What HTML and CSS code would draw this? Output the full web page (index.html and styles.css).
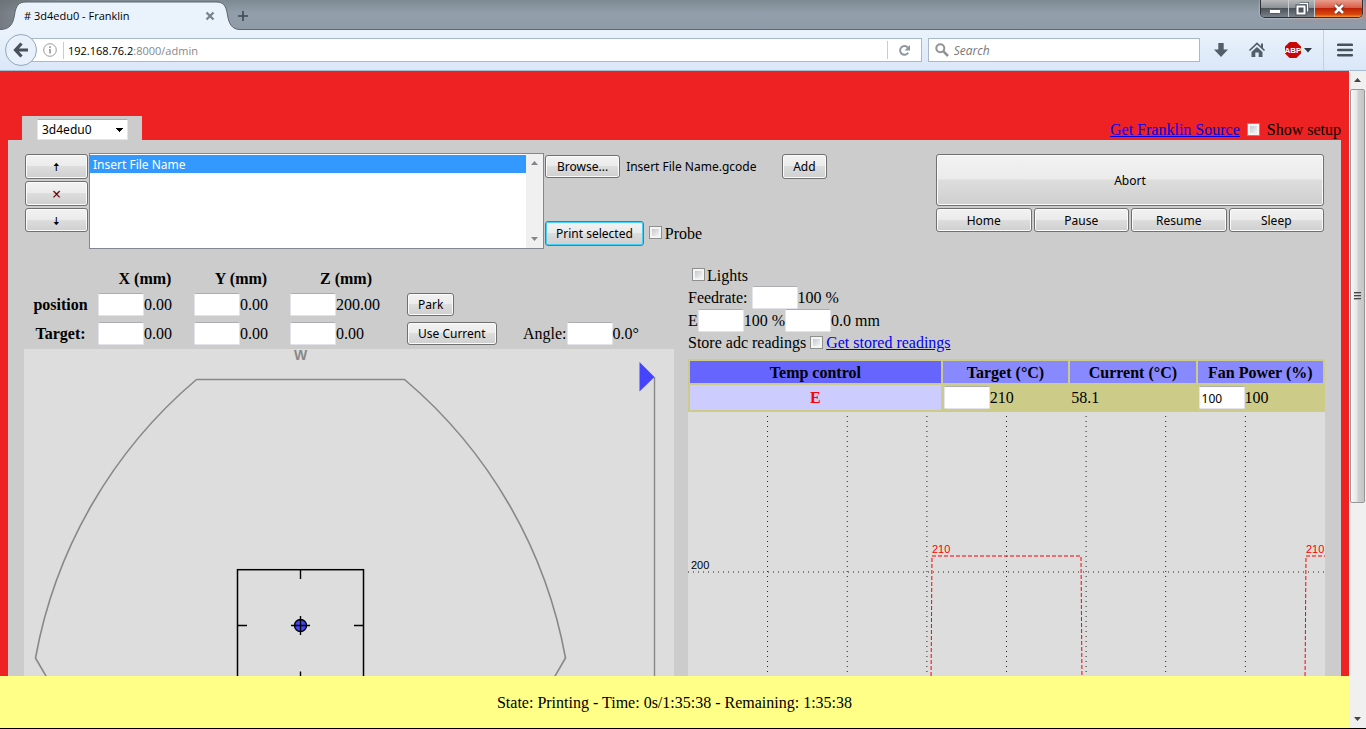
FILE: index.html
```html
<!DOCTYPE html>
<html lang="en">
<head>
<meta charset="utf-8">
<title># 3d4edu0 - Franklin</title>
<link rel="stylesheet" href="styles.css">
</head>
<body>
<header class="titlebar">
  <div class="tab">
    <svg class="tab-shape" width="244" height="30" viewBox="0 0 244 30" aria-hidden="true">
      <path d="M0 30V29.500C10 29.500 13 24 14.500 15C16 5 19 2 26 2H216C223 2 226 5 227.500 15C229 24 232 29.500 240 29.500V30Z" fill="#eaf2fc"/>
      <path d="M0 29.500C10 29.500 13 24 14.500 15C16 5 19 2 26 2H216C223 2 226 5 227.500 15C229 24 232 29.500 240 29.500" fill="none" stroke="#5c666f"/>
    </svg>
    <span class="tab-title"># 3d4edu0 - Franklin</span>
    <button class="icon-btn" type="button" aria-label="Close tab">
      <svg width="10" height="10" viewBox="0 0 10 10"><path d="M1.500 1.500L8.500 8.500M8.500 1.500L1.500 8.500" stroke="#77818b" stroke-width="2.200"/></svg>
    </button>
  </div>
  <button class="icon-btn new-tab" type="button" aria-label="New tab">
    <svg width="12" height="12" viewBox="0 0 12 12"><path d="M6 1V11M1 6H11" stroke="#3d4952" stroke-width="1.600"/></svg>
  </button>
  <div class="window-controls">
    <button class="win-btn win-min" type="button" aria-label="Minimize">
      <svg width="12" height="14" viewBox="0 0 12 14"><rect x=".5" y="7.500" width="11" height="4" rx="1" fill="#fff" stroke="#555c66"/></svg>
    </button>
    <button class="win-btn win-restore" type="button" aria-label="Restore">
      <svg width="14" height="14" viewBox="0 0 14 14"><path d="M4.500 1.500H12.500V9.500" fill="none" stroke="#4b525c" stroke-width="3"/><path d="M4.500 1.500H12.500V9.500" fill="none" stroke="#fff" stroke-width="1.400"/><rect x="2.500" y="4.500" width="7" height="7" fill="none" stroke="#4b525c" stroke-width="4"/><rect x="2.500" y="4.500" width="7" height="7" fill="none" stroke="#fff" stroke-width="2"/></svg>
    </button>
    <button class="win-btn win-close" type="button" aria-label="Close">
      <svg width="12" height="12" viewBox="0 0 12 12"><path d="M2 2L10 10M10 2L2 10" stroke="#6b2a22" stroke-width="4.400"/><path d="M2 2L10 10M10 2L2 10" stroke="#fff" stroke-width="2.600"/></svg>
    </button>
  </div>
</header>

<nav class="toolbar">
  <button class="back" type="button" aria-label="Back">
    <svg width="16" height="16" viewBox="0 0 16 16"><path d="M8.500 1.500L2.500 8L8.500 14.500M3 8H15" fill="none" stroke="#47515b" stroke-width="3.200"/></svg>
  </button>
  <div class="urlbar">
    <svg class="info" width="14" height="14" viewBox="0 0 14 14"><circle cx="7" cy="7" r="6.300" fill="none" stroke="#9a9a9a"/><path d="M7 6V10.500M7 3.300V4.900" stroke="#8a8a8a" stroke-width="1.500"/></svg>
    <div class="url"><span class="host">192.168.76.2</span>:8000/admin</div>
    <button class="icon-btn reload" type="button" aria-label="Reload">
      <svg width="13" height="13" viewBox="0 0 13 13"><path d="M10.200 8.800A4.400 4.400 0 1 1 9.800 3.500" fill="none" stroke="#8d97a1" stroke-width="2"/><path d="M12 1V6.500H6.500Z" fill="#8d97a1"/></svg>
    </button>
  </div>
  <div class="searchbar">
    <svg width="14" height="14" viewBox="0 0 14 14"><circle cx="5.300" cy="5.300" r="4" fill="none" stroke="#939393" stroke-width="2"/><path d="M8.200 8.200L13 13" stroke="#939393" stroke-width="2.600"/></svg>
    <input class="search-input" type="text" placeholder="Search" aria-label="Search">
  </div>
  <div class="tools">
    <button class="icon-btn" type="button" aria-label="Downloads">
      <svg width="18" height="18" viewBox="0 0 18 18"><path d="M6.300 2H11.700V8.500H16L9 16L2 8.500H6.300Z" fill="#535e68"/></svg>
    </button>
    <button class="icon-btn" type="button" aria-label="Home">
      <svg width="18" height="18" viewBox="0 0 18 18"><path d="M1.500 9.500L9 2.500L16.500 9.500" fill="none" stroke="#535e68" stroke-width="1.700"/><path d="M13 2.500H15V8L13 6Z" fill="#535e68"/><path d="M9 6L14.500 11V16H10.700V11.500H7.300V16H3.500V11Z" fill="#535e68"/></svg>
    </button>
    <button class="icon-btn abp" type="button" aria-label="Adblock Plus">
      <svg width="18" height="18" viewBox="0 0 18 18"><path d="M5.600 1H12.400L17 5.600V12.400L12.400 17H5.600L1 12.400V5.600Z" fill="#c80606"/><text class="abp-text" x="9" y="12" text-anchor="middle">ABP</text></svg>
      <svg width="8" height="5" viewBox="0 0 8 5"><path d="M0 0H8L4 4.500Z" fill="#2f3942"/></svg>
    </button>
    <button class="icon-btn menu" type="button" aria-label="Menu">
      <svg width="16" height="14" viewBox="0 0 16 14"><path d="M1.200 1.800H14.800M1.200 7H14.800M1.200 12.200H14.800" stroke="#48525c" stroke-width="2.600" stroke-linecap="round"/></svg>
    </button>
  </div>
</nav>

<div class="window">
  <div class="page">
    <div class="content">
      <div class="top">
        <div class="printer-tab">
          <select class="printer" aria-label="Printer"><option>3d4edu0</option></select>
        </div>
        <div class="setup">
          <a href="#source">Get Franklin Source</a>
          <input class="check" type="checkbox" id="setup">
          <label for="setup">Show setup</label>
        </div>
      </div>
      <main class="panel">
        <section class="jobs">
          <div class="order">
            <button class="btn" type="button" aria-label="Move up">🠅</button>
            <button class="btn remove" type="button" aria-label="Remove">×</button>
            <button class="btn down" type="button" aria-label="Move down">🠇</button>
          </div>
          <div class="queue">
            <select class="queue-list" size="5" aria-label="Print queue"><option selected>Insert File Name</option></select>
            <div class="queue-scroll">
              <svg width="7" height="4" viewBox="0 0 7 4"><path d="M0 4L3.500 0L7 4Z" fill="#85858a"/></svg>
              <svg width="7" height="4" viewBox="0 0 7 4"><path d="M0 0L3.500 4L7 0Z" fill="#85858a"/></svg>
            </div>
          </div>
          <div class="files">
            <div class="file-row">
              <button class="btn browse" type="button">Browse...</button>
              <span class="file-name">Insert File Name.gcode</span>
              <button class="btn" type="button">Add</button>
            </div>
            <div class="file-row">
              <button class="btn primary" type="button">Print selected</button>
              <input class="check" type="checkbox" id="probe">
              <label for="probe">Probe</label>
            </div>
          </div>
          <div class="actions">
            <button class="btn abort" type="button">Abort</button>
            <button class="btn" type="button">Home</button>
            <button class="btn" type="button">Pause</button>
            <button class="btn" type="button">Resume</button>
            <button class="btn" type="button">Sleep</button>
          </div>
        </section>

        <div class="columns">
          <section>
            <table class="position">
              <colgroup><col class="c-label"><col class="c-axis"><col class="c-axis"><col class="c-z"><col class="c-btn"><col></colgroup>
              <tr class="axes"><td></td><th>X (mm)</th><th>Y (mm)</th><th>Z (mm)</th><td></td><td></td></tr>
              <tr>
                <th>position</th>
                <td><div class="field"><input class="num" aria-label="Position X">0.00</div></td>
                <td><div class="field"><input class="num" aria-label="Position Y">0.00</div></td>
                <td><div class="field"><input class="num" aria-label="Position Z">200.00</div></td>
                <td class="cmd"><button class="btn" type="button">Park</button></td>
                <td></td>
              </tr>
              <tr>
                <th>Target:</th>
                <td><div class="field"><input class="num" aria-label="Target X">0.00</div></td>
                <td><div class="field"><input class="num" aria-label="Target Y">0.00</div></td>
                <td><div class="field"><input class="num" aria-label="Target Z">0.00</div></td>
                <td class="cmd"><button class="btn" type="button">Use Current</button></td>
                <td><div class="field"><label for="angle">Angle:</label><input class="num" id="angle">0.0°</div></td>
              </tr>
            </table>
            <svg class="map" viewBox="0 0 650 450" role="img" aria-label="Print area">
              <text class="map-text" x="276.500" y="11" text-anchor="middle">W</text>
              <path d="M172.500 30.500H380.500A476 476 0 0 1 541.500 309L520 346M172.500 30.500A476 476 0 0 0 11.500 309L33 346" fill="none" stroke="#888" stroke-width="1.600"/>
              <rect x="213.500" y="220.700" width="126" height="111.600" fill="none" stroke="#000" stroke-width="1.500"/>
              <path d="M276.500 221V230M276.500 332V322.500M214 276.500H223M339 276.500H330" stroke="#000" stroke-width="1.400"/>
              <circle cx="276.500" cy="276.500" r="6" fill="#44f" stroke="#000" stroke-width="1.400"/>
              <path d="M267 276.500H286M276.500 267V286" stroke="#000" stroke-width="1.400"/>
              <path d="M630.500 28V450" stroke="#888" stroke-width="1.400"/>
              <path d="M615.500 13L630.500 28L615.500 42.500Z" fill="#44f"/>
            </svg>
          </section>

          <section>
            <div class="field lights"><input class="check" type="checkbox" id="lights"><label for="lights">Lights</label></div>
            <div class="field rate"><label class="feed" for="feed">Feedrate:</label><input class="num" id="feed">100 %</div>
            <div class="field rate"><label for="extr">E</label><input class="num" id="extr">100 %<input class="num" aria-label="E position">0.0 mm</div>
            <div class="field adc"><label for="adc">Store adc readings</label><input class="check" type="checkbox" id="adc"><a href="#readings">Get stored readings</a></div>
            <table class="temps">
              <tr><th class="temp-head">Temp control</th><th>Target (°C)</th><th>Current (°C)</th><th>Fan Power (%)</th></tr>
              <tr>
                <th class="heater">E</th>
                <td><div class="field"><input class="num" aria-label="E target">210</div></td>
                <td>58.1</td>
                <td><div class="field"><input class="num" value="100" aria-label="E fan power">100</div></td>
              </tr>
            </table>
            <svg class="graph" viewBox="0 0 637 400" role="img" aria-label="Temperature graph">
              <path d="M79.500 4V400M159.250 4V400M238.900 4V400M318.500 4V400M398.100 4V400M477.700 4V400M557.400 4V400" stroke="#222" stroke-dasharray="1 4"/>
              <path d="M0 160H637" stroke="#222" stroke-dasharray="1 4"/>
              <path d="M243 270L244 144H393L394 270M617 270L618 144H637" fill="none" stroke="#f00" stroke-dasharray="4 2"/>
              <text class="graph-text" x="3" y="157">200</text>
              <text class="graph-text hot" x="244" y="141">210</text>
              <text class="graph-text hot" x="618" y="141">210</text>
            </svg>
          </section>
        </div>
      </main>
    </div>
    <footer class="status">State: Printing - Time: 0s/1:35:38 - Remaining: 1:35:38</footer>
  </div>
  <div class="scrollbar">
    <svg width="7" height="4" viewBox="0 0 7 4"><path d="M0 4L3.500 0L7 4Z" fill="#444"/></svg>
    <div class="track">
      <div class="thumb">
        <svg width="7" height="9" viewBox="0 0 7 9"><path d="M0 .5H7M0 3.500H7M0 6.500H7" stroke="#444"/><path d="M0 1.500H7M0 4.500H7M0 7.500H7" stroke="#aaa"/></svg>
      </div>
    </div>
    <svg width="7" height="4" viewBox="0 0 7 4"><path d="M0 0L3.500 4L7 0Z" fill="#444"/></svg>
  </div>
</div>
</body>
</html>
```

FILE: styles.css
```css
* { box-sizing: border-box; }

body {
  margin: 0;
  height: 100vh;
  display: flex;
  flex-direction: column;
  overflow: hidden;
  border-bottom: 1px solid #000;
  font: 16px/20px "Liberation Serif", serif;
  color: #000;
}

svg { display: block; flex: none; }

button, input, select { font: 12px/16px "Noto Sans", sans-serif; color: #000; margin: 0; }

a { color: #00e; }

.icon-btn {
  display: flex;
  align-items: center;
  padding: 0;
  border: 0;
  background: none;
}

/* Browser title bar */
.titlebar {
  display: flex;
  flex: none;
  height: 30px;
  background: linear-gradient(90deg, rgba(90, 90, 90, .5), transparent 60px), linear-gradient(#7d8a92, #929eab 45%, #8f9ba7);
  border-bottom: 1px solid #5c666f;
}

.tab {
  position: relative;
  display: flex;
  align-items: center;
  width: 230px;
  height: 30px;
  padding: 2px 15px 0 24px;
  font: 11px/16px "Open Sans", sans-serif;
}

.tab-shape { position: absolute; left: 0; top: 0; }
.tab-title { position: relative; flex: 1; }
.tab .icon-btn { position: relative; }
.new-tab { margin-left: 7px; padding-top: 2px; }

.window-controls {
  display: flex;
  height: 18px;
  margin-left: auto;
  margin-right: 3px;
  border: 1px solid #2b3036;
  border-top: 0;
  border-radius: 0 0 5px 5px;
  overflow: hidden;
  box-shadow: 0 0 2px #e0e6ea, 28px 2px 8px -6px #f64;
}

.win-btn {
  display: flex;
  align-items: center;
  justify-content: center;
  width: 28px;
  padding: 0;
  border: 0;
  border-right: 1px solid #c6ccd2;
  background: linear-gradient(#b6b8ba, #8e9296 45%, #4d5258 50%, #7b8189);
}

.win-restore { width: 26px; }

.win-close {
  width: 47px;
  border-right: 0;
  background: linear-gradient(#eb9c8c, #d8604a 45%, #bd2207 50%, #d8480c 85%, #f59a30);
}

/* Browser toolbar */
.toolbar {
  display: flex;
  flex: none;
  align-items: center;
  height: 41px;
  padding-left: 5px;
  background: linear-gradient(#eaf3fc, #dae7f8);
  border-bottom: 1px solid #a3bccf;
}

.back {
  position: relative;
  display: flex;
  align-items: center;
  justify-content: center;
  flex: none;
  width: 32px;
  height: 32px;
  padding: 0;
  border: 1px solid #93a8bc;
  border-radius: 50%;
  background: #e7f0fb;
}

.urlbar, .searchbar {
  display: flex;
  align-items: center;
  height: 24px;
  background: #fff;
  border: 1px solid #a9b9cb;
  min-width: 0;
}

.urlbar {
  flex: 1;
  margin-left: -7px;
  padding-left: 12px;
  font: 11px/16px "Open Sans", sans-serif;
}

.url {
  flex: 1;
  margin-left: 6px;
  padding: 1px 4px 0;
  border-left: 1px solid #ccc;
  color: #888;
}

.host { color: #000; }

.reload {
  height: 18px;
  padding: 0 10px;
  border-left: 1px solid #ccc;
}

.searchbar { flex: none; width: 20%; margin-left: 6px; padding: 0 6px; }

.search-input {
  flex: 1;
  min-width: 0;
  padding: 1px 5px 0;
  border: 0;
  background: none;
  font: italic 12px/16px "Open Sans", sans-serif;
}

.search-input::placeholder { color: #777; }

.tools {
  display: flex;
  align-items: center;
  align-self: stretch;
  gap: 18px;
  padding: 0 13px 0 12px;
}

.abp { gap: 2px; }
.abp-text { font: bold 8px/8px "Liberation Sans", sans-serif; fill: #fff; }

.menu {
  align-self: stretch;
  margin-left: -7px;
  padding-left: 13px;
  border-left: 1px solid #c3d0de;
}

/* Web page viewport */
.window { display: flex; flex: 1; min-height: 0; }

.page {
  display: flex;
  flex: 1;
  flex-direction: column;
  min-width: 0;
  background: #e22;
}

.content { flex: 1; min-height: 0; overflow: hidden; padding: 0 8px; }

.top {
  display: flex;
  align-items: flex-end;
  justify-content: space-between;
  padding: 45px 0 0 14px;
}

.printer-tab { padding: 3px 14px 0 15px; background: #ccc; }

.printer {
  display: block;
  width: 91px;
  height: 21px;
  padding: 1px 4px 0;
  appearance: none;
  border: 1px solid #e3e3eb;
  border-top-color: #abadb3;
  border-radius: 1px;
  background: linear-gradient(to bottom left, #000 50%, transparent 50%) no-repeat 78px 8px / 4px 4px, linear-gradient(to bottom right, #000 50%, transparent 50%) no-repeat 82px 8px / 4px 4px, #fff;
}

.setup { display: flex; align-items: center; gap: 7px; }

.check {
  flex: none;
  width: 13px;
  height: 13px;
  appearance: none;
  border: 1px solid #8e8f8f;
  background: linear-gradient(135deg, #c4c8ce, #f4f4f4) content-box, #f4f4f4;
  padding: 2px;
}

.setup .check, .file-row .check, .adc .check { margin-bottom: 2px; }

.panel { padding: 13px 16px 0; background: #ccc; }

.btn {
  height: 25px;
  padding: 1px 10px 0;
  border: 1px solid #707070;
  border-radius: 3px;
  background: linear-gradient(#f2f2f2, #ebebeb 48%, #ddd 50%, #cfcfcf);
  box-shadow: inset 0 0 0 1px #fbfbfb;
  white-space: nowrap;
}

.primary { border-color: #3c7fb1; box-shadow: inset 0 0 0 1px #46d0f6; }

.jobs {
  display: grid;
  grid-template-columns: 63px 455fr 390fr 388fr;
  gap: 1px;
  padding: 0 1px;
}

.order { display: flex; flex-direction: column; gap: 2px; padding-top: 1px; }
.remove { color: #600; font-size: 16px; }
.down { height: 24px; }

.queue {
  display: flex;
  height: 96px;
  border: 1px solid #828790;
  background: #fff;
}

.queue-list {
  flex: 1;
  min-width: 0;
  padding: 1px 0;
  appearance: none;
  border: 0;
  outline: 0;
  background: #fff;
  overflow: hidden;
}

.queue-list option { min-height: 17px; padding: 1px 3px 0; line-height: 16px; }

.queue-list option:checked {
  background: #39f linear-gradient(#39f, #39f);
  color: #fff;
}

.queue-scroll {
  display: flex;
  flex-direction: column;
  align-items: center;
  justify-content: space-between;
  width: 17px;
  padding: 7px 0;
  background: #f0f0f0;
}

.files {
  display: flex;
  flex-direction: column;
  justify-content: space-between;
  padding: 1px 0 3px;
}

.file-row { display: flex; align-items: center; }
.browse { height: 23px; padding: 1px 11px 0; }
.file-name { width: 156px; margin-left: 6px; padding-top: 1px; font: 12px/16px "Noto Sans", sans-serif; }
.file-row .check { margin-left: 5px; margin-right: 3px; }

.actions {
  display: grid;
  grid-template-columns: repeat(4, 1fr);
  grid-template-rows: 52px 24px;
  align-content: start;
  gap: 2px;
  padding-top: 1px;
}

.actions .btn { height: auto; }
.abort { grid-column: 1 / -1; }

.columns {
  display: grid;
  grid-template-columns: 650fr 637fr;
  gap: 14px;
  margin-top: 15px;
}

.field { display: flex; align-items: center; white-space: pre; }

.num {
  flex: none;
  width: 46px;
  height: 23px;
  padding: 1px 2px 0;
  border: 1px solid #e3e3eb;
  border-top-color: #abadb3;
  border-radius: 2px;
  background: #fff;
}

.position {
  width: 100%;
  margin: 5px 0 1px;
  table-layout: fixed;
  border-collapse: collapse;
}

.position th, .position td { height: 29px; padding: 0 1px; }
.position .axes th, .position .axes td { height: 21px; padding-bottom: 1px; }
.position .cmd { padding-left: 4px; }
.cmd .btn { display: block; height: 23px; }
.c-label { width: 73px; }
.c-axis { width: 96px; }
.c-z { width: 114px; }
.c-btn { width: 119px; }

.map, .graph { width: 100%; background: #ddd; }
.map { overflow: visible; }
.map-text { font: bold 14px/16px "Liberation Sans", sans-serif; fill: #888; }
.graph-text { font: 11px/12px "Liberation Sans", sans-serif; }
.hot { fill: #f00; }

.lights { height: 22px; padding-top: 1px; }
.adc { height: 22px; }
.lights .check { margin: 0 2px 2px 4px; }
.rate { height: 23px; }
.feed { margin-right: 4px; }
.adc .check { margin-left: 4px; margin-right: 3px; }

.temps {
  width: 100%;
  margin-top: 5px;
  table-layout: fixed;
  border-spacing: 2px;
  background: #cc8;
}

.temps td { padding: 1px; }
.temps th { padding: 2px 1px 0; background: #88f; }
.temps .temp-head { width: 40%; background: #66f; }
.temps .heater { padding: 1px; background: #ccf; color: #f00; }

.status {
  flex: none;
  padding: 17px 16px 15px;
  background: #ff8;
  text-align: center;
}

.scrollbar {
  display: flex;
  flex: none;
  flex-direction: column;
  align-items: center;
  width: 17px;
  padding: 7px 0;
  background: #f0f0f0;
}

.track { flex: 1; align-self: stretch; padding: 7px 1px 0; }

.thumb {
  display: flex;
  align-items: center;
  justify-content: center;
  height: 66%;
  border: 1px solid #979797;
  border-radius: 2px;
  background: linear-gradient(90deg, #f5f5f5, #e6e6e8 45%, #cfcfd2 55%, #c6c6ca);
}
```
